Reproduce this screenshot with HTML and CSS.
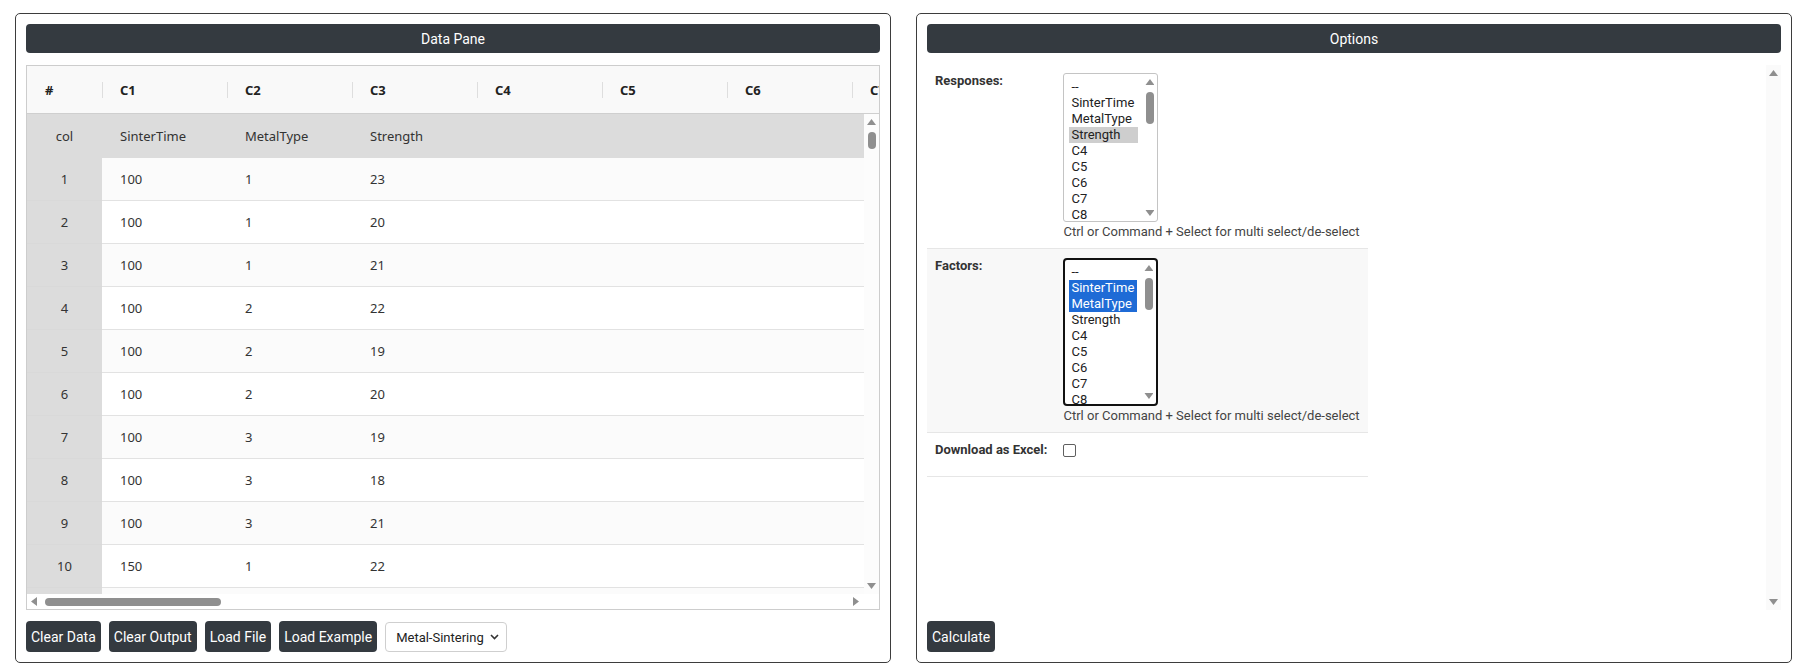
FILE: index.html
```html
<!DOCTYPE html>
<html lang="en">
<head>
<meta charset="utf-8">
<title>Data Pane &amp; Options</title>
<link rel="stylesheet" href="styles.css">
</head>
<body>
<div class="workspace">

  <section class="panel">
    <div class="panel-title">Data Pane</div>

    <div class="grid-frame">
      <div class="grid-head">
        <div class="hcell idx-head">#</div>
        <div class="hcell">C1</div>
        <div class="hcell">C2</div>
        <div class="hcell">C3</div>
        <div class="hcell">C4</div>
        <div class="hcell">C5</div>
        <div class="hcell">C6</div>
        <div class="hcell">C7</div>
      </div>

      <div class="grid-body">
        <div class="grid-rows">
          <div class="row names">
            <div class="cell idx">col</div>
            <div class="cell">SinterTime</div>
            <div class="cell">MetalType</div>
            <div class="cell">Strength</div>
            <div class="cell"></div><div class="cell"></div><div class="cell"></div><div class="cell"></div>
          </div>
          <div class="row odd"><div class="cell idx">1</div><div class="cell">100</div><div class="cell">1</div><div class="cell">23</div><div class="cell"></div><div class="cell"></div><div class="cell"></div><div class="cell"></div></div>
          <div class="row"><div class="cell idx">2</div><div class="cell">100</div><div class="cell">1</div><div class="cell">20</div><div class="cell"></div><div class="cell"></div><div class="cell"></div><div class="cell"></div></div>
          <div class="row odd"><div class="cell idx">3</div><div class="cell">100</div><div class="cell">1</div><div class="cell">21</div><div class="cell"></div><div class="cell"></div><div class="cell"></div><div class="cell"></div></div>
          <div class="row"><div class="cell idx">4</div><div class="cell">100</div><div class="cell">2</div><div class="cell">22</div><div class="cell"></div><div class="cell"></div><div class="cell"></div><div class="cell"></div></div>
          <div class="row odd"><div class="cell idx">5</div><div class="cell">100</div><div class="cell">2</div><div class="cell">19</div><div class="cell"></div><div class="cell"></div><div class="cell"></div><div class="cell"></div></div>
          <div class="row"><div class="cell idx">6</div><div class="cell">100</div><div class="cell">2</div><div class="cell">20</div><div class="cell"></div><div class="cell"></div><div class="cell"></div><div class="cell"></div></div>
          <div class="row odd"><div class="cell idx">7</div><div class="cell">100</div><div class="cell">3</div><div class="cell">19</div><div class="cell"></div><div class="cell"></div><div class="cell"></div><div class="cell"></div></div>
          <div class="row"><div class="cell idx">8</div><div class="cell">100</div><div class="cell">3</div><div class="cell">18</div><div class="cell"></div><div class="cell"></div><div class="cell"></div><div class="cell"></div></div>
          <div class="row odd"><div class="cell idx">9</div><div class="cell">100</div><div class="cell">3</div><div class="cell">21</div><div class="cell"></div><div class="cell"></div><div class="cell"></div><div class="cell"></div></div>
          <div class="row"><div class="cell idx">10</div><div class="cell">150</div><div class="cell">1</div><div class="cell">22</div><div class="cell"></div><div class="cell"></div><div class="cell"></div><div class="cell"></div></div>
          <div class="row odd"><div class="cell idx"></div><div class="cell"></div><div class="cell"></div><div class="cell"></div><div class="cell"></div><div class="cell"></div><div class="cell"></div><div class="cell"></div></div>
        </div>

        <div class="vbar grid-vbar">
          <span class="arrow up"></span>
          <span class="vthumb grid-vthumb"></span>
          <span class="fill"></span>
          <span class="arrow down"></span>
        </div>
        <div class="hbar">
          <span class="arrow left"></span>
          <span class="hthumb"></span>
          <span class="fill"></span>
          <span class="arrow right"></span>
        </div>
        <div class="corner"></div>
      </div>
    </div>

    <div class="toolbar">
      <button class="btn" type="button">Clear Data</button>
      <button class="btn" type="button">Clear Output</button>
      <button class="btn" type="button">Load File</button>
      <button class="btn" type="button">Load Example</button>
      <div class="picker">
        <span>Metal-Sintering</span>
        <svg class="chev" width="9" height="6" viewBox="0 0 9 6"><path d="M1 1l3.5 3.5L8 1" fill="none" stroke="#333" stroke-width="1.6"/></svg>
      </div>
    </div>
  </section>

  <section class="panel">
    <div class="panel-title">Options</div>

    <div class="options-frame">
      <div class="options-body">
        <table class="form-table">
          <tr class="form-row">
            <th>Responses:</th>
            <td>
              <div class="multi">
                <div class="multi-list">
                  <div class="opt">--</div>
                  <div class="opt">SinterTime</div>
                  <div class="opt">MetalType</div>
                  <div class="opt chosen-idle">Strength</div>
                  <div class="opt">C4</div>
                  <div class="opt">C5</div>
                  <div class="opt">C6</div>
                  <div class="opt">C7</div>
                  <div class="opt">C8</div>
                </div>
                <div class="vbar multi-vbar">
                  <span class="arrow up"></span>
                  <span class="vthumb multi-thumb"></span>
                  <span class="fill"></span>
                  <span class="arrow down"></span>
                </div>
              </div>
              <div class="hint">Ctrl or Command + Select for multi select/de-select</div>
            </td>
          </tr>
          <tr class="form-row shaded">
            <th>Factors:</th>
            <td>
              <div class="multi focused">
                <div class="multi-list">
                  <div class="opt">--</div>
                  <div class="opt chosen">SinterTime</div>
                  <div class="opt chosen">MetalType</div>
                  <div class="opt">Strength</div>
                  <div class="opt">C4</div>
                  <div class="opt">C5</div>
                  <div class="opt">C6</div>
                  <div class="opt">C7</div>
                  <div class="opt">C8</div>
                </div>
                <div class="vbar multi-vbar">
                  <span class="arrow up"></span>
                  <span class="vthumb multi-thumb"></span>
                  <span class="fill"></span>
                  <span class="arrow down"></span>
                </div>
              </div>
              <div class="hint">Ctrl or Command + Select for multi select/de-select</div>
            </td>
          </tr>
          <tr class="form-row last">
            <th>Download as Excel:</th>
            <td><input class="check" type="checkbox"></td>
          </tr>
        </table>
      </div>
      <div class="vbar options-vbar">
        <span class="arrow up"></span>
        <span class="fill"></span>
        <span class="arrow down"></span>
      </div>
    </div>

    <div class="toolbar">
      <button class="btn" type="button">Calculate</button>
    </div>
  </section>

</div>
</body>
</html>
```
FILE: styles.css
```css
* {
  box-sizing: border-box;
}

body {
  margin: 0;
  background: #fff;
  font-family: Roboto, "Liberation Sans", sans-serif;
  color: #333;
}

/* two side-by-side panels */
.workspace {
  display: flex;
  gap: 25px;
  padding: 13px 12px 0 15px;
}

.panel {
  flex: 1 1 0;
  min-width: 0;
  height: 650px;
  border: 1px solid #3d3d3d;
  border-radius: 5px;
  padding: 10px;
  display: flex;
  flex-direction: column;
}

.panel-title {
  flex: none;
  height: 29px;
  background: #343a40;
  color: #fff;
  border-radius: 4px;
  display: flex;
  align-items: center;
  justify-content: center;
  font-size: 14px;
}

/* ---------- data grid ---------- */
.grid-frame {
  flex: 1;
  min-height: 0;
  margin-top: 12px;
  border: 1px solid #cdcdcd;
  display: flex;
  flex-direction: column;
  overflow: hidden;
  font-family: "Noto Sans", "Open Sans", sans-serif;
  font-size: 13px;
  color: #333;
}

.grid-head {
  flex: none;
  height: 48px;
  display: flex;
  background: #f9f9f9;
  border-bottom: 1px solid #cfcfcf;
  overflow: hidden;
}

.hcell {
  flex: none;
  width: 125px;
  display: flex;
  align-items: center;
  padding-left: 18px;
  font-weight: 700;
  color: #222;
  background: linear-gradient(#dedede, #dedede) left center / 1px 16px no-repeat;
}

.hcell.idx-head {
  width: 75px;
  background: none;
}

.grid-body {
  flex: 1;
  min-height: 0;
  display: grid;
  grid-template-columns: 1fr 15px;
  grid-template-rows: 1fr 15px;
}

.grid-rows {
  overflow: hidden;
  min-width: 0;
  min-height: 0;
}

.row {
  display: flex;
  height: 43px;
  background: #fff;
}

.row.odd {
  background: #fbfbfb;
}

.row.names {
  height: 44px;
  background: #dcdcdc;
}

.cell {
  flex: none;
  width: 125px;
  display: flex;
  align-items: center;
  padding-left: 18px;
  border-bottom: 1px solid #e2e2e2;
}

.row.names .cell {
  border-bottom: none;
}

.cell.idx {
  width: 75px;
  padding-left: 0;
  justify-content: center;
  background: #dcdcdc;
  border-bottom-color: #d9d9d9;
}

.corner {
  background: #fff;
}

/* ---------- drawn scrollbars ---------- */
.vbar {
  display: flex;
  flex-direction: column;
  align-items: center;
}

.hbar {
  display: flex;
  align-items: center;
}

.fill {
  flex: 1;
}

.arrow {
  flex: none;
  background: #8f8f8f;
}

.arrow.up,
.arrow.down {
  width: 9px;
  height: 6px;
}

.arrow.up {
  clip-path: polygon(50% 0, 100% 100%, 0 100%);
}

.arrow.down {
  clip-path: polygon(0 0, 100% 0, 50% 100%);
}

.arrow.left,
.arrow.right {
  width: 6px;
  height: 9px;
}

.arrow.left {
  clip-path: polygon(100% 0, 100% 100%, 0 50%);
  margin-left: 4px;
}

.arrow.right {
  clip-path: polygon(0 0, 100% 50%, 0 100%);
  margin-right: 5px;
}

.vthumb {
  flex: none;
  width: 8px;
  border-radius: 4px;
  background: #8f8f8f;
}

.hthumb {
  flex: none;
  height: 8px;
  width: 176px;
  margin-left: 8px;
  border-radius: 4px;
  background: #8f8f8f;
}

.grid-vbar {
  background: #fcfcfc;
}

.grid-vbar .arrow.up {
  margin-top: 5px;
}

.grid-vthumb {
  height: 17px;
  margin-top: 7px;
}

.grid-vbar .arrow.down {
  margin-bottom: 5px;
}

/* ---------- toolbar ---------- */
.toolbar {
  flex: none;
  height: 31px;
  margin-top: 11px;
  display: flex;
  gap: 8px;
}

.btn {
  height: 31px;
  padding: 0 5px;
  border: none;
  border-radius: 4px;
  background: #343a40;
  color: #fff;
  font-family: Roboto, "Liberation Sans", sans-serif;
  font-size: 14px;
  cursor: pointer;
}

.picker {
  width: 122px;
  height: 30px;
  margin-top: 1px;
  border: 1px solid #cfcfcf;
  border-radius: 4px;
  background: #fff;
  display: flex;
  align-items: center;
  justify-content: space-between;
  padding: 0 7px 0 10px;
  font-size: 13px;
  color: #222;
}

/* ---------- options ---------- */
.options-frame {
  flex: 1;
  min-height: 0;
  margin-top: 12px;
  display: grid;
  grid-template-columns: 1fr 15px;
}

.options-body {
  overflow: hidden;
  min-width: 0;
}

.options-vbar {
  background: #fafafa;
}

.options-vbar .arrow.up {
  margin-top: 5px;
}

.options-vbar .arrow.down {
  margin-bottom: 5px;
}

.form-table {
  width: 440px;
  border-collapse: collapse;
  font-size: 13px;
}

.form-row th,
.form-row td {
  padding: 8px;
  vertical-align: top;
  text-align: left;
  line-height: 16px;
}

.form-row th {
  width: 136px;
  font-weight: 700;
  color: #333;
  white-space: nowrap;
}

.form-row.shaded {
  background: #f8f8f8;
  border-top: 1px solid #e6e6e6;
}

.form-row.shaded th,
.form-row.shaded td {
  padding-top: 9px;
}

.form-row.last {
  border-top: 1px solid #e6e6e6;
  border-bottom: 1px solid #e6e6e6;
}

.form-row.last th,
.form-row.last td {
  padding-top: 9px;
  padding-bottom: 18px;
}

.hint {
  margin-top: 2px;
  color: #444;
  white-space: nowrap;
}

.multi {
  width: 95px;
  height: 149px;
  border: 1px solid #c4c4c4;
  border-radius: 3px;
  background: #fff;
  display: flex;
  overflow: hidden;
}

.multi.focused {
  border: 2px solid #111;
  border-radius: 4px;
  height: 148px;
}

.multi-list {
  flex: 1;
  min-width: 0;
  padding: 5px 4px 0 5px;
  overflow: hidden;
}

.multi.focused .multi-list {
  padding: 4px 4px 0 4px;
}

.opt {
  height: 16px;
  line-height: 16px;
  padding-left: 2px;
  color: #222;
  white-space: nowrap;
}

.opt.chosen-idle {
  background: #cecece;
}

.opt.chosen {
  background: #1e6bd6;
  color: #fff;
}

.multi-vbar {
  flex: none;
  width: 15px;
}

.multi-vbar .arrow.up {
  margin-top: 5px;
}

.multi-thumb {
  height: 32px;
  margin-top: 7px;
}

.multi-vbar .arrow.down {
  margin-bottom: 5px;
}

.check {
  appearance: none;
  -webkit-appearance: none;
  width: 13px;
  height: 13px;
  margin: 2px 0 0 0;
  border: 1px solid #5f5f5f;
  border-radius: 2px;
  background: #fff;
  display: block;
}
```
